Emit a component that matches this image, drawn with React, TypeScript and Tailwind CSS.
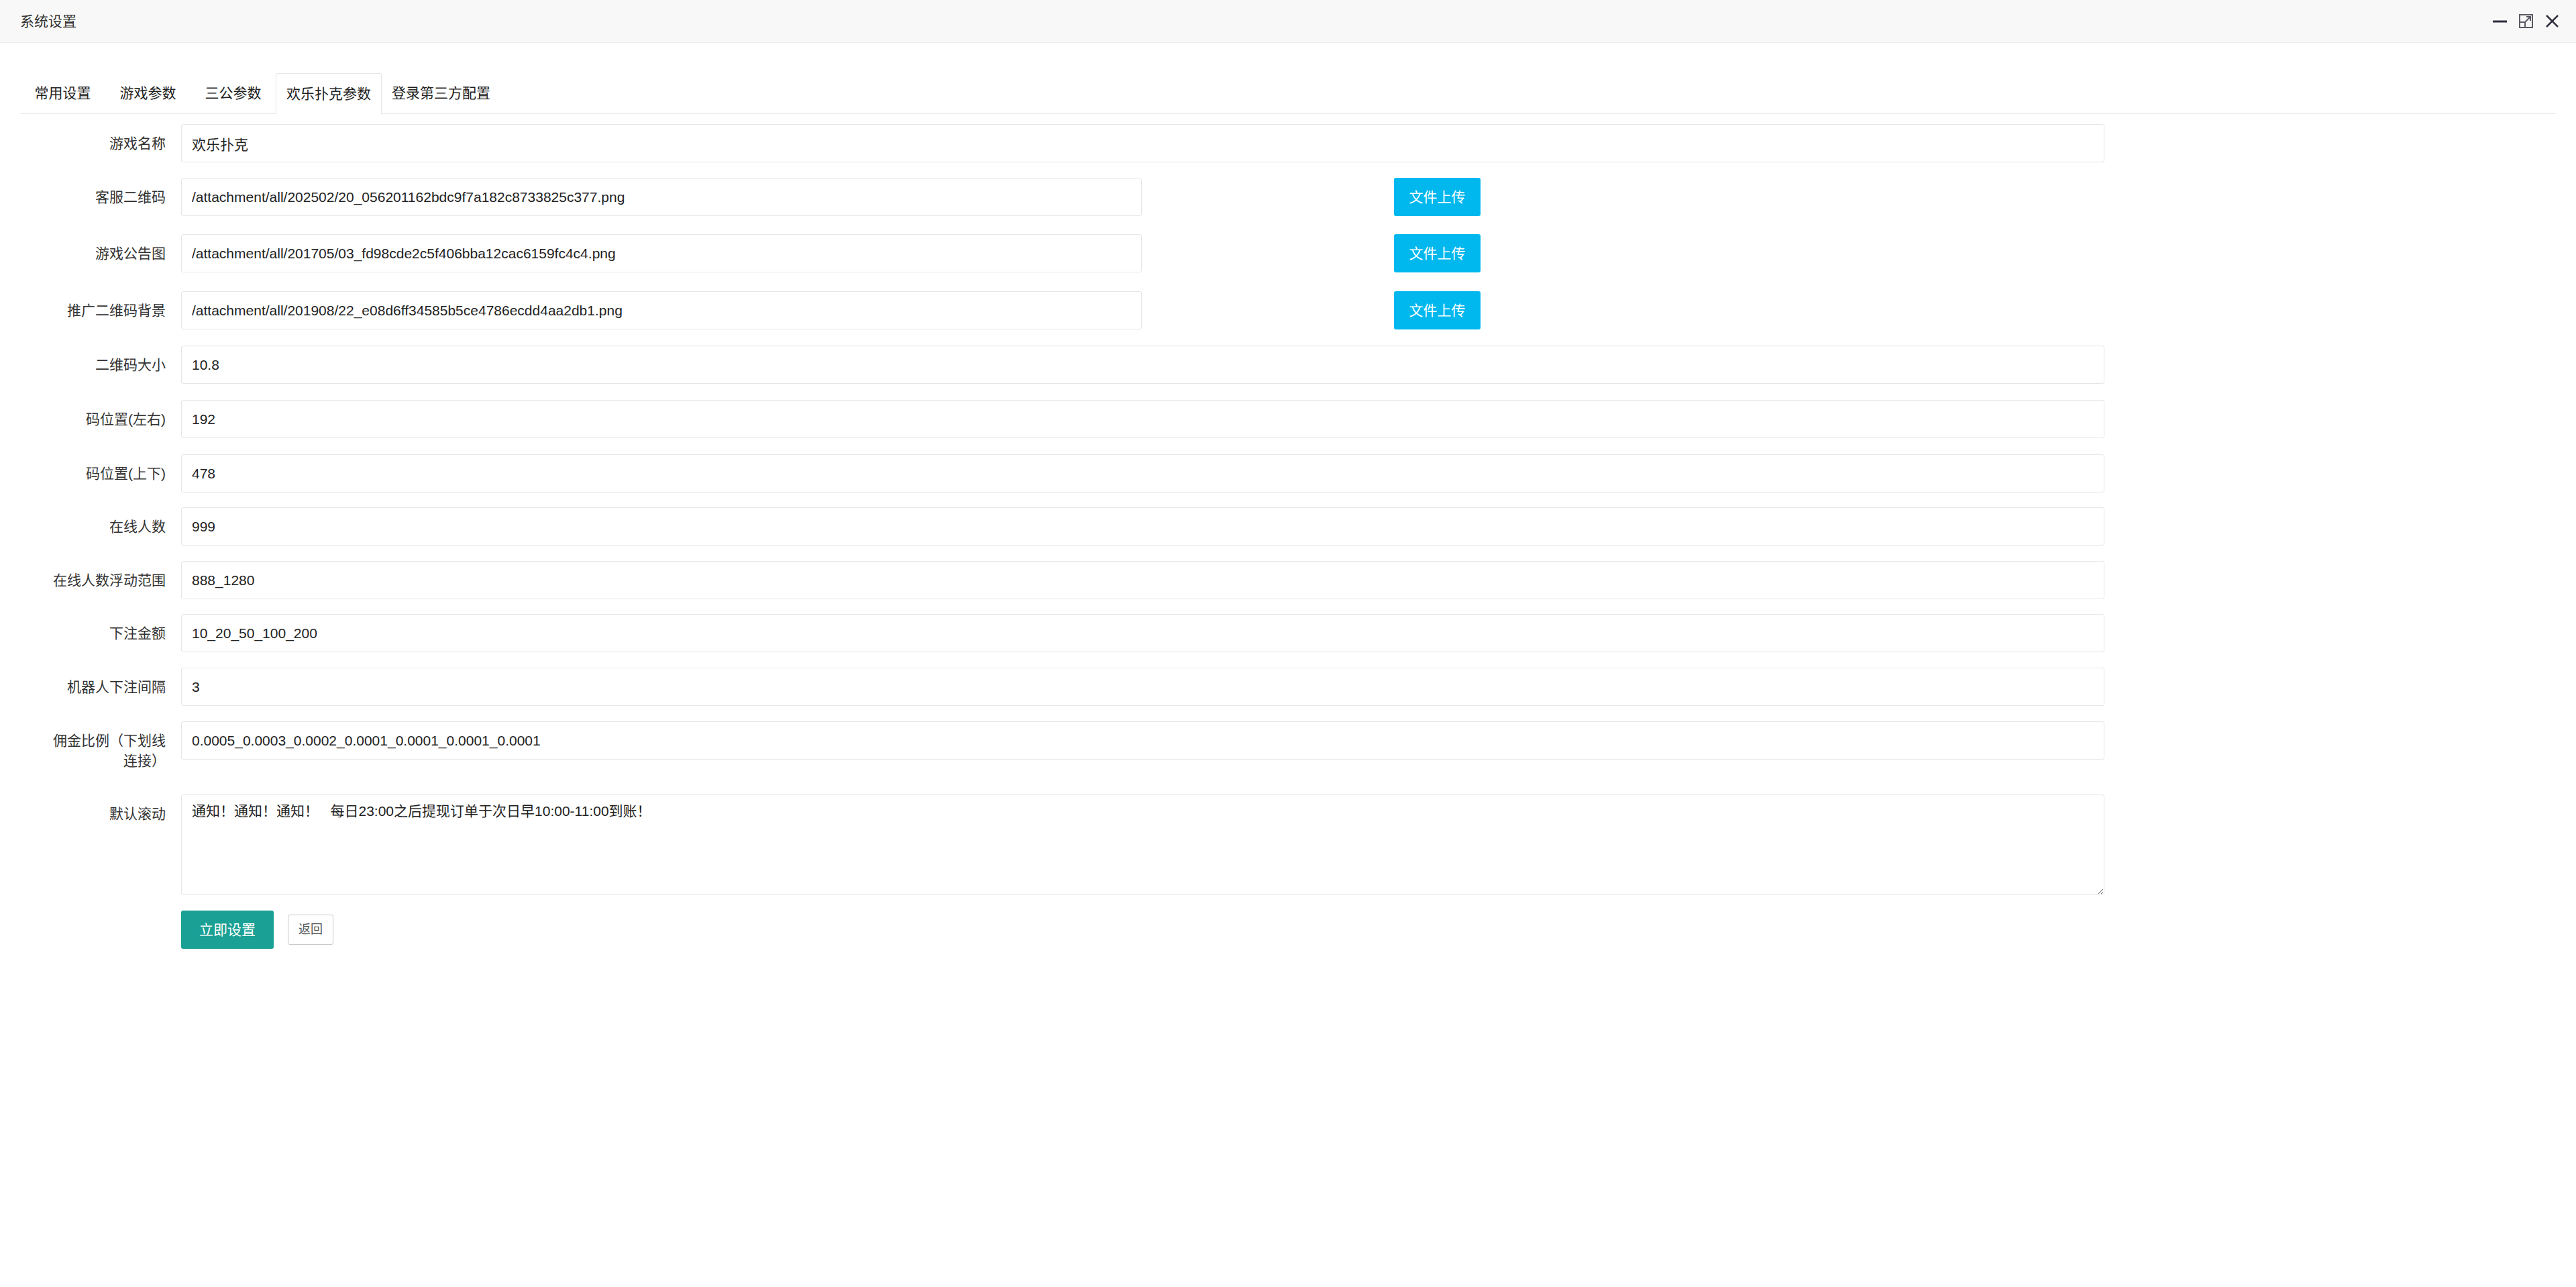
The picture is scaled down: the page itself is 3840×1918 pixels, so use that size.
import React from "react";

type Field = {
  label: string;
  value: string;
  upload?: boolean;
  gap: string;
};

const TABS = ["常用设置", "游戏参数", "三公参数", "欢乐扑克参数", "登录第三方配置"];
const ACTIVE_TAB = 3;

const FIELDS: Field[] = [
  { label: "游戏名称", value: "欢乐扑克", gap: "mb-[23px]" },
  {
    label: "客服二维码",
    value: "/attachment/all/202502/20_056201162bdc9f7a182c8733825c377.png",
    upload: true,
    gap: "mb-[27px]",
  },
  {
    label: "游戏公告图",
    value: "/attachment/all/201705/03_fd98cde2c5f406bba12cac6159fc4c4.png",
    upload: true,
    gap: "mb-[28px]",
  },
  {
    label: "推广二维码背景",
    value: "/attachment/all/201908/22_e08d6ff34585b5ce4786ecdd4aa2db1.png",
    upload: true,
    gap: "mb-[24px]",
  },
  { label: "二维码大小", value: "10.8", gap: "mb-[24px]" },
  { label: "码位置(左右)", value: "192", gap: "mb-[24px]" },
  { label: "码位置(上下)", value: "478", gap: "mb-[22px]" },
  { label: "在线人数", value: "999", gap: "mb-[23px]" },
  { label: "在线人数浮动范围", value: "888_1280", gap: "mb-[22px]" },
  { label: "下注金额", value: "10_20_50_100_200", gap: "mb-[23px]" },
  { label: "机器人下注间隔", value: "3", gap: "mb-[23px]" },
  {
    label: "佣金比例（下划线连接）",
    value: "0.0005_0.0003_0.0002_0.0001_0.0001_0.0001_0.0001",
    gap: "mb-[22px]",
  },
];

function WindowIcons() {
  return (
    <div className="ml-auto flex items-center gap-[18px] pr-[25px]">
      <svg width="21" height="21" viewBox="0 0 21 21">
        <line x1="0" y1="11" x2="21" y2="11" stroke="#2e2d3c" strokeWidth="3" />
      </svg>
      <svg width="21" height="21" viewBox="0 0 21 21" fill="none" stroke="#5a5a64" strokeWidth="2">
        <rect x="1" y="1" width="19" height="19" />
        <rect x="1" y="12" width="8" height="8" />
        <line x1="9" y1="12" x2="17" y2="4" />
        <polyline points="11,4 17,4 17,10" />
      </svg>
      <svg width="21" height="21" viewBox="0 0 21 21" stroke="#2e2d3c" strokeWidth="2.5">
        <line x1="2" y1="2" x2="19" y2="19" />
        <line x1="19" y1="2" x2="2" y2="19" />
      </svg>
    </div>
  );
}

function FormRow({ field }: { field: Field }) {
  return (
    <div className={`flex items-start ${field.gap}`}>
      <label className="w-[240px] shrink-0 pl-[36px] pr-[23px] py-[13.5px] text-right text-[21px] leading-[30px] text-[#333]">
        {field.label}
      </label>
      <input
        readOnly
        defaultValue={field.value}
        className={`h-[57px] rounded-[3px] border border-[#e6e6e6] bg-white px-[15px] text-[21px] text-[#222] outline-none ${
          field.upload ? "w-[1432px]" : "w-[2867px]"
        }`}
      />
      {field.upload && (
        <button className="ml-[376px] h-[57px] w-[129px] rounded-[3px] bg-[#00b8ee] text-[21px] text-white">
          文件上传
        </button>
      )}
    </div>
  );
}

export default function App() {
  return (
    <div className="min-h-screen bg-white font-['Liberation_Sans','Noto_Sans_CJK_SC',sans-serif] text-[#333]">
      <div className="flex h-[64px] items-center border-b border-[#eeeeee] bg-[#f8f8f8]">
        <span className="pl-[30px] text-[21px] text-[#333]">系统设置</span>
        <WindowIcons />
      </div>

      <div className="px-[30px] pt-[45px]">
        <ul className="flex h-[61px] items-end border-b border-[#e6e6e6]">
          {TABS.map((tab, i) =>
            i === ACTIVE_TAB ? (
              <li
                key={tab}
                className="relative -mb-px h-[61px] min-w-[127px] rounded-t-[3px] border-x border-t border-[#e6e6e6] bg-white px-[15px] text-center text-[21px] leading-[60px] text-[#222]"
              >
                {tab}
              </li>
            ) : (
              <li
                key={tab}
                className="h-[60px] min-w-[127px] px-[15px] text-center text-[21px] leading-[60px] text-[#222]"
              >
                {tab}
              </li>
            ),
          )}
        </ul>

        <form className="pt-[15px]">
          {FIELDS.map((field) => (
            <FormRow key={field.label} field={field} />
          ))}

          <div className="mb-[23px] flex items-start">
            <label className="w-[240px] shrink-0 pl-[36px] pr-[23px] py-[13.5px] text-right text-[21px] leading-[30px] text-[#333]">
              默认滚动
            </label>
            <textarea
              readOnly
              defaultValue="通知！通知！通知！   每日23:00之后提现订单于次日早10:00-11:00到账！"
              className="h-[150px] w-[2867px] rounded-[3px] border border-[#e6e6e6] bg-white px-[15px] py-[9px] text-[21px] leading-[30px] text-[#222] outline-none"
            />
          </div>

          <div className="flex items-center pl-[240px]">
            <button
              type="button"
              className="h-[57px] w-[138px] rounded-[3px] bg-[#1aa094] text-[21px] text-white"
            >
              立即设置
            </button>
            <button
              type="button"
              className="ml-[21px] h-[45px] rounded-[3px] border border-[#c9c9c9] bg-white px-[15px] text-[18px] text-[#555]"
            >
              返回
            </button>
          </div>
        </form>
      </div>
    </div>
  );
}
